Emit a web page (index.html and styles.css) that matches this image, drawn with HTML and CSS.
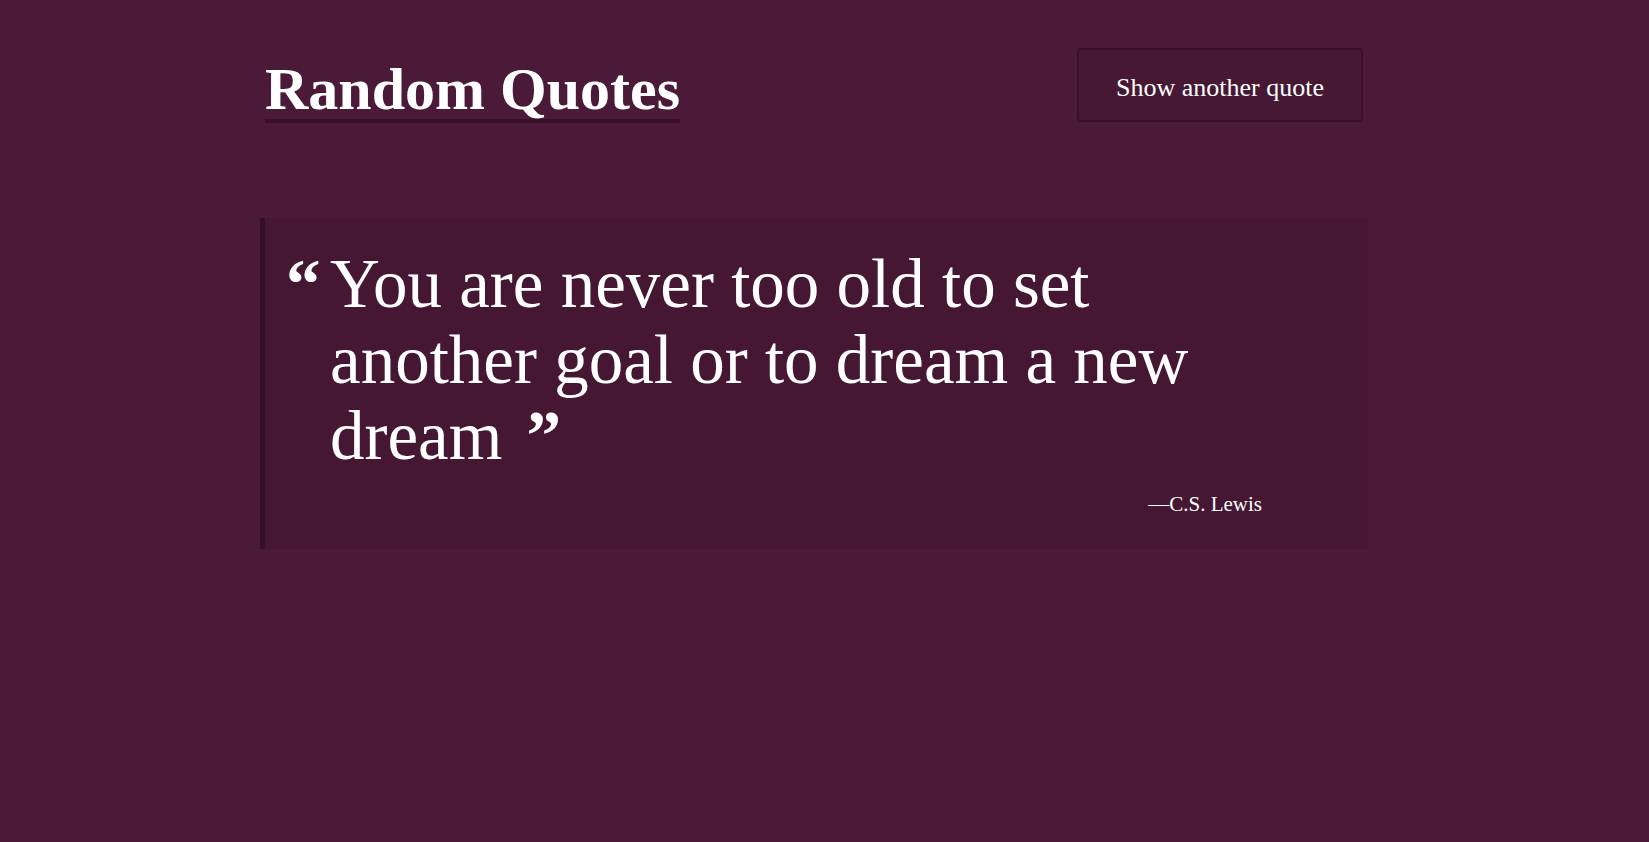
FILE: index.html
```html
<!DOCTYPE html>
<html lang="en">
<head>
<meta charset="utf-8">
<title>Random Quotes</title>
<link rel="stylesheet" href="styles.css">
</head>
<body>
<div class="page">
  <header class="header">
    <h1 class="title">Random Quotes</h1>
    <button class="btn" type="button">Show another quote</button>
  </header>
  <section class="quote-box">
    <span class="mark">“</span>
    <div class="quote-body">
      <p class="quote-text">You are never too old to set another goal or to dream a new dream<span class="mark-close">”</span></p>
      <p class="author">—C.S. Lewis</p>
    </div>
  </section>
</div>
</body>
</html>
```
FILE: styles.css
```css
html, body {
  margin: 0;
  padding: 0;
  background: #4b1a38;
  color: #ffffff;
  font-family: "Liberation Serif", "DejaVu Serif", serif;
}

.page {
  width: 1108px;
  margin-left: 260px;
  padding-top: 48px;
}

.header {
  display: flex;
  justify-content: space-between;
  align-items: flex-start;
  padding: 0 5px;
}

.title {
  margin: 12px 0 0 0;
  font-size: 60px;
  line-height: 59px;
  font-weight: 700;
  border-bottom: 4px solid #38102a;
}

.btn {
  width: 286px;
  height: 74px;
  box-sizing: border-box;
  display: flex;
  align-items: center;
  justify-content: center;
  background: #461833;
  border: 2px solid #3a1029;
  border-radius: 4px;
  color: #ffffff;
  font-family: "Liberation Serif", "DejaVu Serif", serif;
  font-size: 26px;
  padding: 5px 0 0 0;
  cursor: pointer;
}

.quote-box {
  margin-top: 95px;
  display: flex;
  background: #451733;
  border-left: 5px solid #331027;
  padding: 28px 0 30px 21px;
}

.mark {
  flex: none;
  width: 44px;
  font-size: 69px;
  line-height: 76px;
  font-weight: 700;
}

.quote-body {
  width: 932px;
}

.quote-text {
  margin: 0;
  font-size: 69px;
  line-height: 76px;
}

.mark-close {
  display: inline-block;
  margin-left: 24px;
  line-height: 40px;
  font-weight: 700;
}

.author {
  margin: 15px 0 0 0;
  text-align: right;
  font-size: 21px;
  line-height: 30px;
}
```
